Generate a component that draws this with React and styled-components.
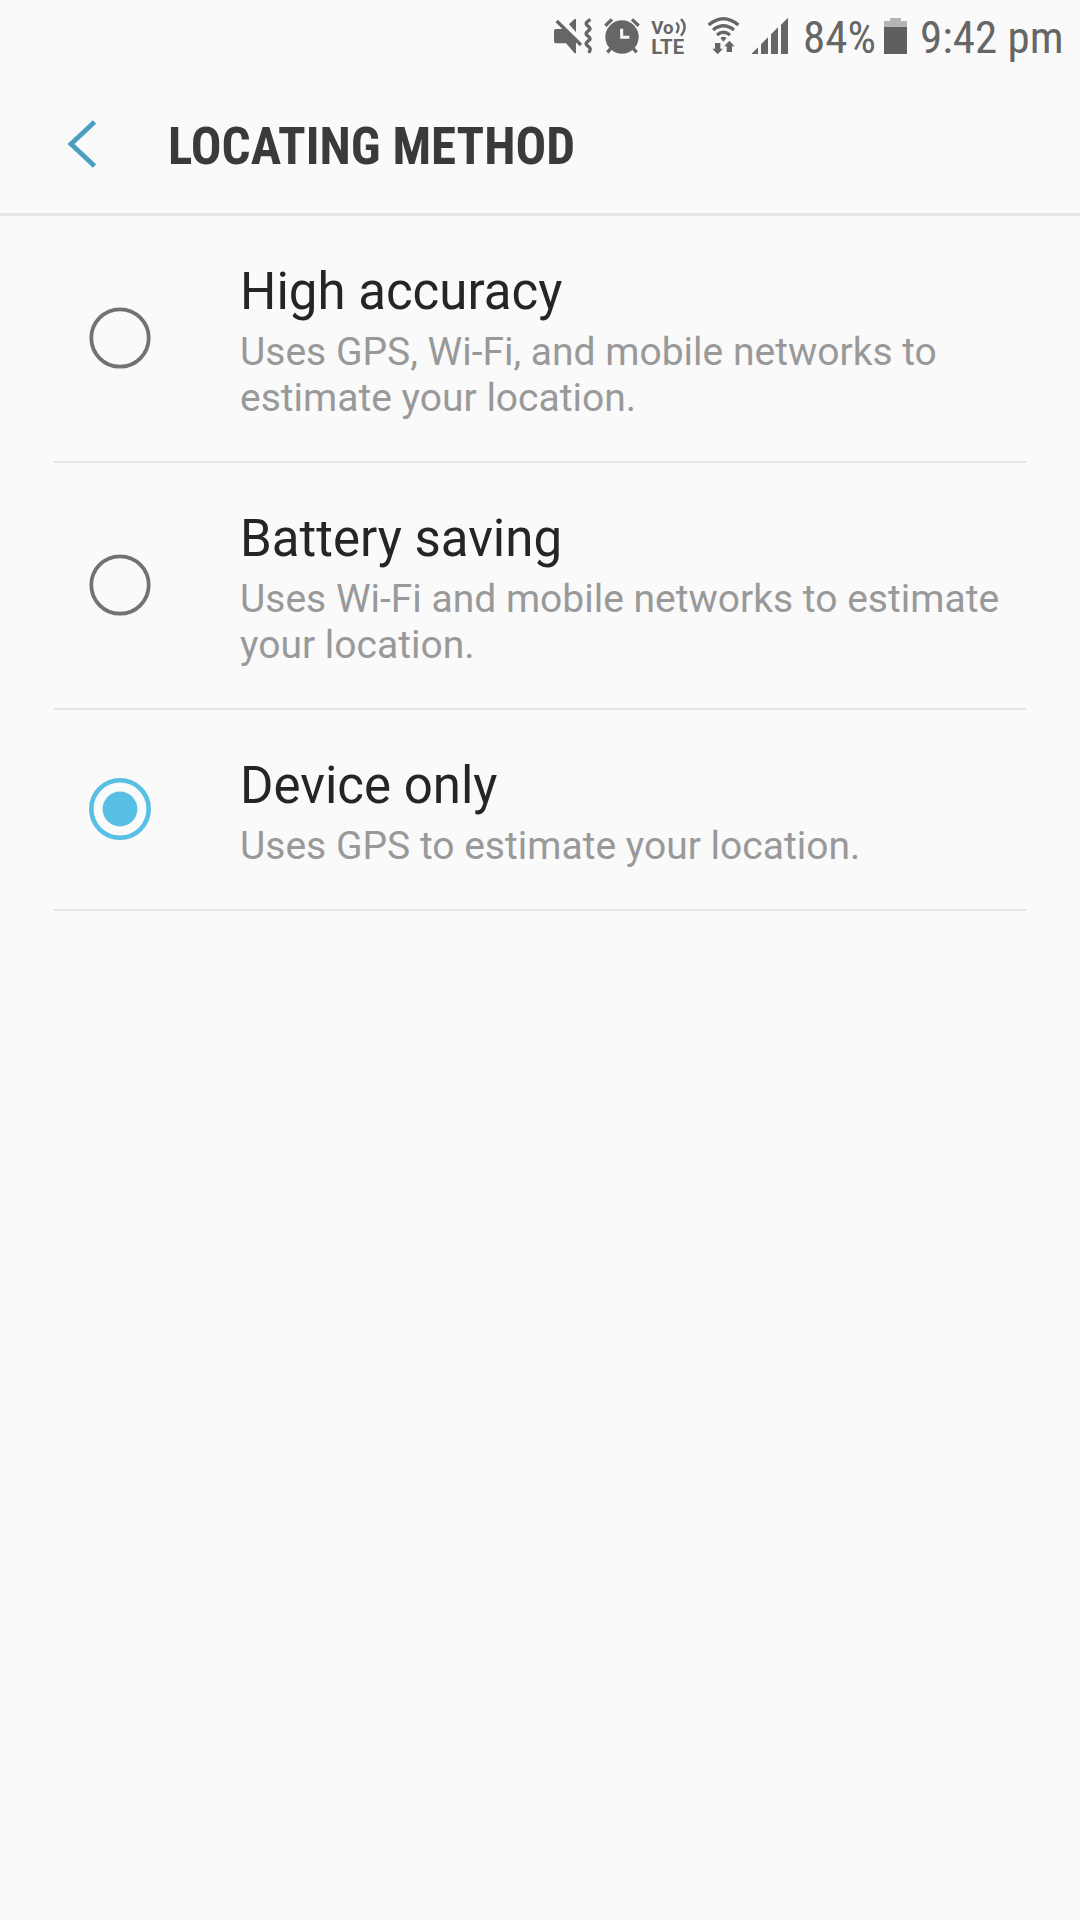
import React, { useState } from "react";
import styled, { createGlobalStyle } from "styled-components";

const GlobalStyle = createGlobalStyle`
  body {
    margin: 0;
    background: #fafafa;
  }
`;

const Screen = styled.div`
  display: flex;
  flex-direction: column;
  min-height: 1920px;
  width: 1080px;
  background: #fafafa;
  font-family: Roboto, "Noto Sans", sans-serif;
`;

const StatusBar = styled.header`
  display: flex;
  align-items: center;
  justify-content: flex-end;
  box-sizing: border-box;
  height: 72px;
  padding-right: 18px;
  color: #666;
`;

const StatusIcon = styled.svg`
  display: block;
  flex: none;
  width: ${(p) => p.$width}px;
  height: 72px;
  margin-right: ${(p) => p.$gap}px;
`;

const StatusText = styled.span`
  width: ${(p) => p.$width}px;
  margin-right: ${(p) => p.$gap || 0}px;
  font-family: "Roboto Condensed", Roboto, sans-serif;
  font-stretch: 75%;
  font-size: 45px;
  line-height: 54px;
  padding-top: 4px;
  white-space: nowrap;
`;

const TitleBar = styled.div`
  display: flex;
  align-items: center;
  box-sizing: border-box;
  height: 144px;
  padding-left: 66px;
  border-bottom: 3px solid #e6e7e7;
`;

const BackButton = styled.button`
  display: flex;
  width: 102px;
  margin-top: 2px;
  padding: 0;
  border: 0;
  background: none;
`;

const PageTitle = styled.h1`
  margin: 8px 0 0;
  font-family: "Roboto Condensed", Roboto, sans-serif;
  font-stretch: 75%;
  font-size: 51px;
  font-weight: 700;
  line-height: 61px;
  color: #3a3a3a;
`;

const OptionList = styled.div`
  display: flex;
  flex-direction: column;
  padding: 0 54px;
`;

const Option = styled.div`
  display: flex;
  align-items: center;
  padding-left: 35px;
  border-bottom: 2px solid #e4e5e5;
`;

const RadioMark = styled.svg`
  display: block;
  flex: none;
  width: 62px;
  height: 62px;
  margin: 0 89px 1px 0;
  fill: none;
  stroke: ${(p) => (p.$on ? "#58c0e4" : "#727272")};
`;

const OptionText = styled.div`
  flex: 1;
  padding: 45px 0 40px;
`;

const OptionTitle = styled.div`
  font-size: 51px;
  line-height: 61px;
  color: #252525;
`;

const OptionNote = styled.div`
  margin-top: 7px;
  font-size: 39px;
  line-height: 46px;
  color: #999;
`;

const options = [
  { title: "High accuracy", lines: ["Uses GPS, Wi-Fi, and mobile networks to", "estimate your location."] },
  { title: "Battery saving", lines: ["Uses Wi-Fi and mobile networks to estimate", "your location."] },
  { title: "Device only", lines: ["Uses GPS to estimate your location."] },
];

function MuteIcon() {
  return (
    <StatusIcon viewBox="42 0 114 216" $width={38} $gap={12}>
      <g fill="#666">
        <path d="M42 93q0-6 6-6H74L108 120V160H104L78 130H48q-6 0-6-6z" />
        <path d="M87 73L104 57H108V97z" />
      </g>
      <path d="M50 63L123 135" stroke="#666" strokeWidth="10" />
      <path d="M151 58L141 66Q136 71 141 76L148 82Q152 86 148 90L141 96Q136 101 141 106L148 112Q152 116 148 120L141 126Q136 131 141 136L148 142Q152 146 150 150L147 159" fill="none" stroke="#666" strokeWidth="10" />
    </StatusIcon>
  );
}

function AlarmIcon() {
  return (
    <StatusIcon viewBox="192 0 108 216" $width={36} $gap={11}>
      <circle cx="246" cy="111" r="50" fill="#666" />
      <g fill="none" stroke="#666" strokeWidth="10">
        <path d="M196 77L216 58M276 58L296 77M212 146L202 157M280 146L290 157" />
      </g>
      <path d="M245 86V112H268" fill="none" stroke="#fafafa" strokeWidth="9" />
    </StatusIcon>
  );
}

function VolteIcon() {
  return (
    <StatusIcon viewBox="333 0 108 216" $width={36} $gap={20}>
      <text fill="#666" fontFamily="Roboto, sans-serif" fontWeight="700">
        <tspan x="334" y="102" fontSize="56">Vo</tspan>
        <tspan x="334" y="161" fontSize="61">LTE</tspan>
      </text>
      <path d="M409 68Q422 82 409 99M423 57Q445 80 423 107" fill="none" stroke="#666" strokeWidth="7" />
    </StatusIcon>
  );
}

function WifiIcon() {
  return (
    <StatusIcon viewBox="51 0 99 216" $width={33} $gap={11}>
      <g fill="none" stroke="#666" strokeWidth="10">
        <path d="M56 75Q100 38 145 75" />
        <path d="M69 90Q100 65 132 90" />
        <path d="M81 105Q100 89 120 105" />
      </g>
      <g fill="#666">
        <path d="M91 114Q100 107 110 114L100 125z" />
        <path d="M75 129H91V146H99L83 163L67 146H75z" />
        <path d="M110 156H126V139H134L118 122L102 139H110z" />
      </g>
    </StatusIcon>
  );
}

function SignalIcon() {
  return (
    <StatusIcon viewBox="183 0 114 216" $width={38} $gap={14}>
      <path d="M184 162L204 142V162zM213 162V133L234 112V162zM243 162V103L264 82V162zM273 162V74L294 53V162z" fill="#666" />
    </StatusIcon>
  );
}

function BatteryIcon() {
  return (
    <StatusIcon viewBox="72 0 69 216" $width={23} $gap={13}>
      <path d="M72 81V63H90V54H123V63H141V81z" fill="#b5b5b5" />
      <path d="M72 81H141V162H72z" fill="#5f5f5f" />
    </StatusIcon>
  );
}

function Radio({ on }) {
  return (
    <RadioMark viewBox="0 0 62 62" $on={on}>
      <circle cx="31" cy="31" r={on ? 28.7 : 28.7} strokeWidth={on ? 4.6 : 3.8} />
      {on && <circle cx="31" cy="31" r="17.4" fill="#58c0e4" stroke="none" />}
    </RadioMark>
  );
}

export default function App() {
  const [selected, setSelected] = useState(2);
  return (
    <Screen>
      <GlobalStyle />
      <StatusBar>
        <MuteIcon />
        <AlarmIcon />
        <VolteIcon />
        <WifiIcon />
        <SignalIcon />
        <StatusText $width={72} $gap={9}>84%</StatusText>
        <BatteryIcon />
        <StatusText $width={142}>9:42 pm</StatusText>
      </StatusBar>
      <TitleBar>
        <BackButton aria-label="Back">
          <svg width="32" height="50" viewBox="0 0 32 50">
            <path d="M28.5 3L5 25L28.5 47" fill="none" stroke="#489fc0" strokeWidth="4.8" />
          </svg>
        </BackButton>
        <PageTitle>LOCATING METHOD</PageTitle>
      </TitleBar>
      <OptionList role="radiogroup">
        {options.map((o, i) => (
          <Option key={o.title} role="radio" aria-checked={i === selected} onClick={() => setSelected(i)}>
            <Radio on={i === selected} />
            <OptionText>
              <OptionTitle>{o.title}</OptionTitle>
              <OptionNote>
                {o.lines.map((line) => (
                  <div key={line}>{line}</div>
                ))}
              </OptionNote>
            </OptionText>
          </Option>
        ))}
      </OptionList>
    </Screen>
  );
}
